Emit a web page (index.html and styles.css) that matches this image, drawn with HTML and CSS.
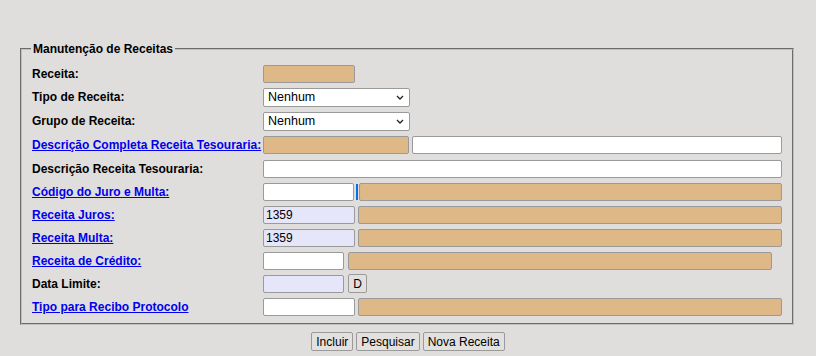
FILE: index.html
```html
<!DOCTYPE html>
<html>
<head>
<meta charset="utf-8">
<link rel="stylesheet" href="styles.css">
</head>
<body>
<div class="page">
  <form class="cadastro">
    <fieldset class="box">
      <legend>Manutenção de Receitas</legend>

      <div class="row">
        <span class="lbl">Receita:</span>
        <input class="fld tan w92" type="text">
      </div>
      <div class="row tall">
        <span class="lbl">Tipo de Receita:</span>
        <span class="combo">
          <select class="sel"><option>Nenhum</option></select>
          <svg class="arrow" width="8" height="5" viewBox="0 0 8 5"><path d="M1 1 L4 4 L7 1" fill="none" stroke="#222" stroke-width="1.3"/></svg>
        </span>
      </div>
      <div class="row tall">
        <span class="lbl">Grupo de Receita:</span>
        <span class="combo">
          <select class="sel"><option>Nenhum</option></select>
          <svg class="arrow" width="8" height="5" viewBox="0 0 8 5"><path d="M1 1 L4 4 L7 1" fill="none" stroke="#222" stroke-width="1.3"/></svg>
        </span>
      </div>
      <div class="row tall">
        <a class="lbl lnk" href="#">Descrição Completa Receita Tesouraria:</a>
        <input class="fld tan w146" type="text">
        <input class="fld w370 gap3" type="text">
      </div>
      <div class="row">
        <span class="lbl">Descrição Receita Tesouraria:</span>
        <input class="fld w519" type="text">
      </div>
      <div class="row">
        <a class="lbl lnk" href="#">Código do Juro e Multa:</a>
        <input class="fld w91" type="text">
        <span class="caret"></span>
        <input class="fld tan w424 gap1" type="text">
      </div>
      <div class="row">
        <a class="lbl lnk" href="#">Receita Juros:</a>
        <input class="fld lav w92" type="text" value="1359">
        <input class="fld tan w424 gap3" type="text">
      </div>
      <div class="row">
        <a class="lbl lnk" href="#">Receita Multa:</a>
        <input class="fld lav w92" type="text" value="1359">
        <input class="fld tan w424 gap3" type="text">
      </div>
      <div class="row">
        <a class="lbl lnk" href="#">Receita de Crédito:</a>
        <input class="fld w81" type="text">
        <input class="fld tan w424 gap4" type="text">
      </div>
      <div class="row">
        <span class="lbl">Data Limite:</span>
        <input class="fld lav w81" type="text">
        <button class="btn small" type="button">D</button>
      </div>
      <div class="row">
        <a class="lbl lnk" href="#">Tipo para Recibo Protocolo</a>
        <input class="fld w92" type="text">
        <input class="fld tan w424 gap3" type="text">
      </div>
    </fieldset>

    <div class="actions">
      <button class="btn" type="button">Incluir</button>
      <button class="btn" type="button">Pesquisar</button>
      <button class="btn" type="button">Nova Receita</button>
    </div>
  </form>
</div>
</body>
</html>
```

FILE: styles.css
```css
body {
  margin: 0;
  background: #dfdedc;
  font-family: "Liberation Sans", Arial, sans-serif;
  font-size: 12px;
  color: #000;
}
.page {
  padding: 42px 22px 0 20px;
}
.box {
  margin: 0;
  padding: 6px 10px 5px 10px;
  border: 2px groove #c0c0c0;
  min-width: 0;
}
.box legend {
  font-weight: bold;
  font-size: 12px;
  line-height: 14px;
  padding: 0 2px;
  margin-left: -1px;
}
.row {
  display: flex;
  align-items: center;
  height: 23px;
}
.row.tall {
  height: 24px;
}
.lbl {
  width: 231px;
  font-weight: bold;
  white-space: nowrap;
}
.lnk {
  color: #0000ee;
}
.fld {
  box-sizing: border-box;
  height: 18px;
  margin: 0;
  padding: 1px 2px;
  border: 1px solid #9a9a9a;
  border-radius: 2px;
  background: #fff;
  font-family: "Liberation Sans", Arial, sans-serif;
  font-size: 12px;
  color: #000;
}
.tan { background: #deb887; }
.lav { background: #e6e6fa; }
.w81 { width: 81px; }
.w91 { width: 91px; }
.w92 { width: 92px; }
.w146 { width: 146px; }
.w370 { width: 370px; }
.w424 { width: 424px; }
.w519 { width: 519px; }
.gap1 { margin-left: 1px; }
.gap3 { margin-left: 3px; }
.gap4 { margin-left: 4px; }
.caret {
  width: 2px;
  height: 16px;
  margin-left: 2px;
  background: #0a6fe0;
}
.combo {
  position: relative;
  display: inline-flex;
}
.sel {
  box-sizing: border-box;
  width: 147px;
  height: 19px;
  margin: 0;
  padding: 0 0 0 4px;
  border: 1px solid #9a9a9a;
  border-radius: 2px;
  background: #fff;
  font-family: "Liberation Sans", Arial, sans-serif;
  font-size: 12.5px;
  color: #000;
  appearance: none;
  -webkit-appearance: none;
}
.arrow {
  position: absolute;
  right: 6px;
  top: 7px;
  pointer-events: none;
}
.actions {
  display: flex;
  justify-content: center;
  gap: 3px;
  margin-top: 7px;
  padding-left: 2px;
}
.btn {
  box-sizing: border-box;
  height: 19px;
  margin: 0;
  padding: 0 4px;
  border: 1px solid #9a9a9a;
  border-radius: 2px;
  background: #e2e1df;
  font-family: "Liberation Sans", Arial, sans-serif;
  font-size: 12px;
  color: #000;
}
.btn.small {
  width: 19px;
  margin-left: 4px;
  padding: 0;
}
```
